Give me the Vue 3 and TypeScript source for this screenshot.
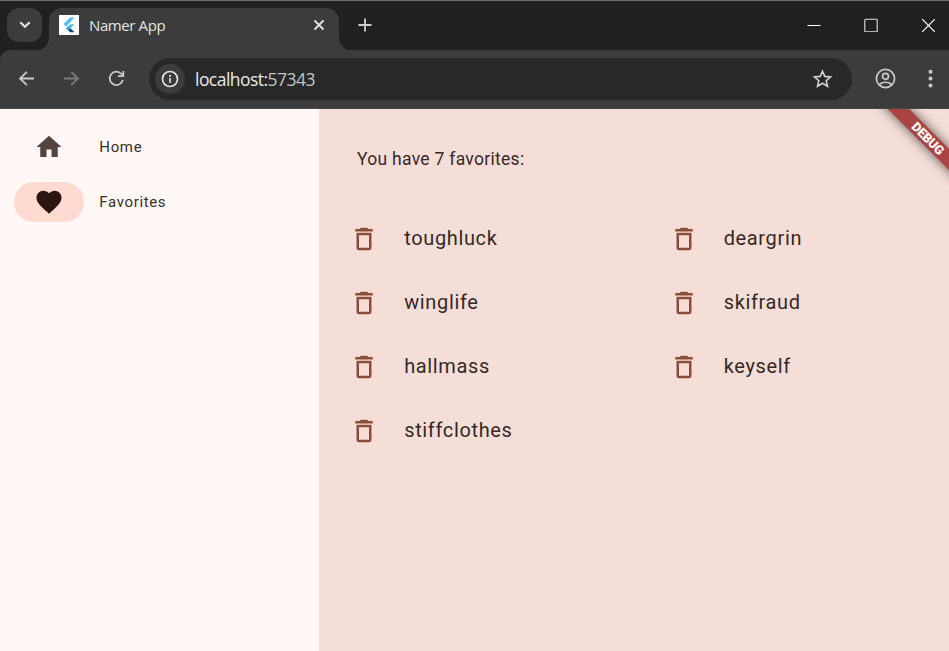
<script setup lang="ts">
import { computed, ref } from 'vue'

const selected = ref<'home' | 'favorites'>('favorites')
const favorites = ref<string[]>(['toughluck', 'deargrin', 'winglife', 'skifraud', 'hallmass', 'keyself', 'stiffclothes'])
const heading = computed(() => `You have ${favorites.value.length} favorites:`)

function remove(name: string) {
  favorites.value = favorites.value.filter((f) => f !== name)
}
</script>

<template>
  <div class="window">
    <header class="tabstrip">
      <div class="tab-search">
        <svg width="12" height="8" viewBox="0 0 12 8"><path d="M1.3 1.3 6 5.8l4.7-4.5" fill="none" stroke="#e3e3e3" stroke-width="2.1" /></svg>
      </div>
      <div class="tab">
        <svg class="flare left" width="14" height="14" viewBox="0 0 14 14"><path d="M14 0v14H0A14 14 0 0 0 14 0Z" fill="#3c3c3c" /></svg>
        <svg class="favicon" width="20" height="20" viewBox="0 0 20 20">
          <path d="M0 0h20v20H0z" fill="#fff" />
          <path d="M11.3 2.6h4.2L6.9 11.4 4.6 9.1z" fill="#45c1f5" />
          <path d="M11.3 9.3h4.2l-4.1 4-2.3-2z" fill="#45c1f5" />
          <path d="m7 13.2 2.2-2.1 2.2 2.2-2.2 2.1z" fill="#23a7e8" />
          <path d="m9.2 15.4 2.2-2.1 4.1 4h-4.2z" fill="#063f91" />
        </svg>
        <span class="tab-title">Namer App</span>
        <svg class="tab-close" width="12" height="12" viewBox="0 0 12 12"><path d="m1.5 1.5 9 9m0-9-9 9" stroke="#e3e3e3" stroke-width="1.8" /></svg>
        <svg class="flare right" width="14" height="14" viewBox="0 0 14 14"><path d="M0 0v14h14A14 14 0 0 1 0 0Z" fill="#3c3c3c" /></svg>
      </div>
      <svg class="new-tab" width="14" height="14" viewBox="0 0 14 14"><path d="M7 .5v13M.5 7h13" stroke="#d0d0d0" stroke-width="1.8" /></svg>
      <div class="controls">
        <svg width="14" height="14" viewBox="0 0 14 14"><path d="M.5 7.5h13" stroke="#fff" stroke-width="1" /></svg>
        <svg width="14" height="14" viewBox="0 0 14 14"><rect x=".8" y="1.3" width="12.4" height="12.4" rx=".8" fill="none" stroke="#e0e0e0" stroke-width="1.1" /></svg>
        <svg width="14" height="14" viewBox="0 0 14 14"><path d="m1.2 1.2 12.6 12.6m0-12.6L1.2 13.8" stroke="#fff" stroke-width="1.2" /></svg>
      </div>
    </header>

    <div class="toolbar">
      <div class="nav-buttons">
        <svg width="18" height="18" viewBox="0 0 18 18"><path d="M16 8.5H2.5M8.9 1.8 2 8.5l6.9 6.7" fill="none" stroke="#c9c9c9" stroke-width="1.8" /></svg>
        <svg width="18" height="18" viewBox="0 0 18 18"><path d="M1 8.5h13.5M8.1 1.8 15 8.5l-6.9 6.7" fill="none" stroke="#7b7b7b" stroke-width="1.8" /></svg>
        <svg width="18" height="18" viewBox="0 0 18 18"><path d="M14.9 10.1A6.7 6.7 0 1 1 13.5 4l1.4 1.6M15.3 1v5.2H10" fill="none" stroke="#c9c9c9" stroke-width="1.8" /></svg>
      </div>
      <div class="omnibox">
        <span class="site-info">
          <svg width="18" height="18" viewBox="0 0 18 18"><circle cx="9" cy="9" r="7.5" fill="none" stroke="#e3e3e3" stroke-width="1.7" /><path d="M9 7.9v4.9M9 5v1.9" stroke="#e3e3e3" stroke-width="1.7" /></svg>
        </span>
        <span class="url">localhost:<span class="port">57343</span></span>
        <svg class="star" width="20" height="20" viewBox="0 0 20 20"><path d="m9.5 2.2 2.3 5.2 5.8.5-4.4 3.8 1.3 5.6-5-3-5 3 1.3-5.6-4.4-3.8 5.8-.5z" fill="none" stroke="#d0d0d0" stroke-width="1.6" /></svg>
      </div>
      <svg class="profile" width="22" height="22" viewBox="0 0 22 22"><g fill="none" stroke="#c9c9c9" stroke-width="1.7"><circle cx="10.5" cy="10.5" r="9.1" /><circle cx="10.5" cy="8.3" r="3" /><path d="M4.3 16.5c3.5-3 8.9-3 12.4 0" /></g></svg>
      <svg class="menu" width="6" height="20" viewBox="0 0 6 20"><g fill="#c9c9c9"><circle cx="2.5" cy="2.8" r="2" /><circle cx="2.5" cy="9.6" r="2" /><circle cx="2.5" cy="16.4" r="2" /></g></svg>
    </div>

    <main class="app">
      <nav class="rail">
        <button class="destination" :class="{ active: selected === 'home' }" @click="selected = 'home'">
          <span class="indicator"><svg width="30" height="30" viewBox="0 0 24 24"><path d="M10 20v-6h4v6h5v-8h3L12 3 2 12h3v8z" fill="currentColor" /></svg></span>
          <span>Home</span>
        </button>
        <button class="destination" :class="{ active: selected === 'favorites' }" @click="selected = 'favorites'">
          <span class="indicator"><svg width="30" height="30" viewBox="0 0 24 24"><path d="m12 21.35-1.45-1.32C5.4 15.36 2 12.28 2 8.5 2 5.42 4.42 3 7.5 3c1.74 0 3.41.81 4.5 2.09C13.09 3.81 14.76 3 16.5 3 19.58 3 22 5.42 22 8.5c0 3.78-3.4 6.86-8.55 11.54z" fill="currentColor" /></svg></span>
          <span>Favorites</span>
        </button>
      </nav>
      <section class="page">
        <p class="heading">{{ heading }}</p>
        <ul class="grid">
          <li v-for="name in favorites" :key="name" class="favorite">
            <button class="delete" @click="remove(name)">
              <svg width="30" height="30" viewBox="0 0 24 24"><path d="M6 19c0 1.1.9 2 2 2h8c1.1 0 2-.9 2-2V7H6v12zM8 9h8v10H8V9zm7.5-5-1-1h-5l-1 1H5v2h14V4z" fill="currentColor" /></svg>
            </button>
            <span class="name">{{ name }}</span>
          </li>
        </ul>
      </section>
      <div class="banner">DEBUG</div>
    </main>
  </div>
</template>

<style>
body {
  margin: 0;
  overflow: hidden;
}
</style>

<style scoped>
.window {
  display: flex;
  flex-direction: column;
  height: 651px;
  overflow: hidden;
  box-sizing: border-box;
  background: #1f2120;
  font-family: 'Open Sans', 'Noto Sans', sans-serif;
}
svg {
  display: block;
  flex: none;
}
button {
  border: 0;
  padding: 0;
  background: none;
  font: inherit;
  letter-spacing: inherit;
  color: inherit;
}
.tabstrip {
  height: 50px;
  box-sizing: border-box;
  border-top: 1px solid #6a6f6d;
  display: flex;
  align-items: flex-start;
}
.tab-search {
  margin: 7px 7px 0;
  width: 35px;
  height: 34px;
  border-radius: 12px;
  background: #3c3c3c;
  display: grid;
  place-items: center;
}
.tab {
  position: relative;
  width: 290px;
  height: 43px;
  margin-top: 6.5px;
  padding: 0 14px 8px 10px;
  box-sizing: border-box;
  border-radius: 13px 13px 0 0;
  background: #3c3c3c;
  display: flex;
  align-items: center;
}
.flare {
  position: absolute;
  bottom: 0;
}
.left {
  left: -14px;
}
.right {
  right: -14px;
}
.tab-title {
  margin-left: 10px;
  padding-bottom: 1px;
  flex: 1;
  font-size: 15px;
  letter-spacing: -0.4px;
  color: #e3e3e3;
}
.new-tab {
  margin: 17px 0 0 19px;
}
.controls {
  margin: 17px 14px 0 auto;
  display: flex;
  gap: 43px;
}
.toolbar {
  height: 59px;
  box-sizing: border-box;
  border-bottom: 1px solid #484848;
  border-top-left-radius: 10px;
  background: #3c3c3c;
  display: flex;
  align-items: center;
  padding: 0 15px 0 18px;
}
.nav-buttons {
  display: flex;
  gap: 27px;
}
.omnibox {
  margin-left: 23px;
  width: 703px;
  height: 42px;
  border-radius: 21px;
  box-sizing: border-box;
  padding: 0 19px 0 6px;
  background: #282828;
  display: flex;
  align-items: center;
}
.site-info {
  width: 30px;
  height: 30px;
  border-radius: 50%;
  background: #3c3c3c;
  display: grid;
  place-items: center;
}
.url {
  margin-left: 10px;
  flex: 1;
  font-size: 17.5px;
  letter-spacing: -0.54px;
  color: #e8e8e8;
}
.port {
  color: #c4c4c4;
}
.profile {
  margin-left: 23px;
}
.menu {
  margin-left: auto;
}
.app {
  position: relative;
  flex: 1;
  display: flex;
  overflow: hidden;
  background: #f5ded8;
  font-family: Roboto, sans-serif;
}
.rail {
  width: 319px;
  box-sizing: border-box;
  padding: 17.5px 14px;
  background: #fff8f6;
  display: flex;
  flex-direction: column;
  gap: 15px;
}
.destination {
  height: 40px;
  display: flex;
  align-items: center;
  gap: 15.3px;
  font-size: 15px;
  letter-spacing: 0.64px;
  color: #3a2f2d;
}
.indicator {
  width: 70px;
  height: 40px;
  border-radius: 20px;
  display: grid;
  place-items: center;
  color: #534340;
}
.active .indicator {
  background: #ffdad1;
  color: #2c150f;
}
.page {
  flex: 1;
}
.heading {
  margin: 37.5px 0 0 38px;
  font-size: 17.5px;
  line-height: 25px;
  letter-spacing: 0.29px;
  color: #352926;
}
.grid {
  list-style: none;
  margin: 35px -9px 0 0;
  padding: 0;
  display: grid;
  grid-template-columns: 1fr 1fr;
}
.favorite {
  height: 64px;
  display: flex;
  align-items: center;
  gap: 25.2px;
  padding-left: 30px;
  font-size: 20px;
  letter-spacing: 0.64px;
  color: #352926;
}
.name {
  padding-bottom: 2px;
}
.delete {
  color: #8f4c38;
}
.banner {
  position: absolute;
  left: 869px;
  top: 22.5px;
  width: 120px;
  height: 15px;
  line-height: 15px;
  text-align: center;
  text-indent: -3px;
  transform: rotate(45deg);
  background: #ac4343;
  box-shadow: 0 0 12px rgba(0, 0, 0, 0.65);
  color: #fff;
  font-size: 12.75px;
  letter-spacing: -0.2px;
  font-weight: 900;
}
</style>
